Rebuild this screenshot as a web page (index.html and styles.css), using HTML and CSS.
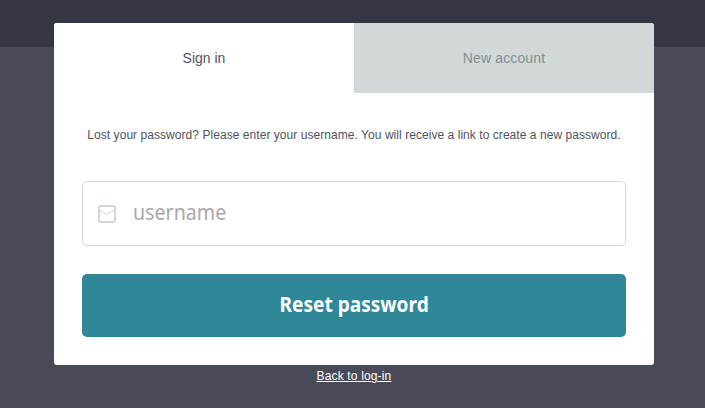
FILE: index.html
```html
<!DOCTYPE html>
<html lang="en">
<head>
<meta charset="utf-8">
<title>Reset password</title>
<link rel="stylesheet" href="styles.css">
</head>
<body>
<main class="page">
  <section class="card">
    <nav class="tabs">
      <a class="tab tab-active">Sign in</a>
      <a class="tab tab-new">New account</a>
    </nav>
    <p class="message">Lost your password? Please enter your username. You will receive a link to create a new password.</p>
    <form class="form">
      <label class="field">
        <svg class="icon" width="18" height="18" viewBox="0 0 18 18" fill="none" stroke="#d2d8d8">
          <rect x="1" y="1" width="16" height="16" rx="1.5" stroke-width="2"/>
          <path d="M2 5.5L9 9.2L16 5.5" stroke-width="1"/>
        </svg>
        <input class="input" type="text" placeholder="username">
      </label>
      <button class="button" type="button"><span class="button-text">Reset password</span></button>
    </form>
  </section>
  <a class="back">Back to log-in</a>
</main>
</body>
</html>
```

FILE: styles.css
```css
* { box-sizing: border-box; }
body {
  margin: 0;
  height: 408px;
  overflow: hidden;
  background: linear-gradient(#343642 47px, #484b57 47px);
  font-family: "Liberation Sans", Arial, sans-serif;
  color: #505260;
}
.page {
  display: flex;
  flex-direction: column;
  align-items: center;
  width: 600px;
  margin-left: 54px;
  padding-top: 23px;
}
.card {
  width: 600px;
  height: 342px;
  background: #fff;
  border-radius: 3px;
  overflow: hidden;
}
.tabs { display: flex; height: 70px; }
.tab {
  flex: 1;
  font-size: 14px;
  line-height: 70px;
  text-align: center;
}
.tab-active { background: #fff; color: #505260; }
.tab-new {
  background: #d2d8d8;
  color: #809191;
  letter-spacing: 0.15px;
}
.message {
  margin: 0;
  height: 88px;
  line-height: 84px;
  font-size: 12px;
  letter-spacing: 0.052px;
  text-align: center;
  white-space: nowrap;
}
.form { padding: 0 28px; }
.field {
  display: flex;
  align-items: center;
  height: 65px;
  padding-left: 15px;
  border: 1px solid #d2d8d8;
  border-radius: 5px;
}
.icon { flex: none; }
.input {
  width: 480px;
  height: 60px;
  padding: 0 0 4px 16px;
  border: 0;
  outline: 0;
  background: transparent;
  font-family: "Noto Sans", sans-serif;
  font-size: 21px;
  transform: scaleX(0.935);
  transform-origin: 0 50%;
  margin-left: 2px;
}
.input::placeholder { color: #a9a9a9; }
.button {
  display: block;
  width: 100%;
  height: 63px;
  margin-top: 28px;
  padding: 0 0 3px;
  border: 0;
  border-radius: 5px;
  background: #2f889a;
  color: #fff;
  font: bold 20.5px/60px "Noto Sans", sans-serif;
}
.button-text { display: inline-block; transform: scaleX(0.93); }
.back {
  margin-top: 4px;
  font-size: 12px;
  line-height: 14px;
  letter-spacing: 0.15px;
  color: #fff;
  text-decoration: underline;
}
```
